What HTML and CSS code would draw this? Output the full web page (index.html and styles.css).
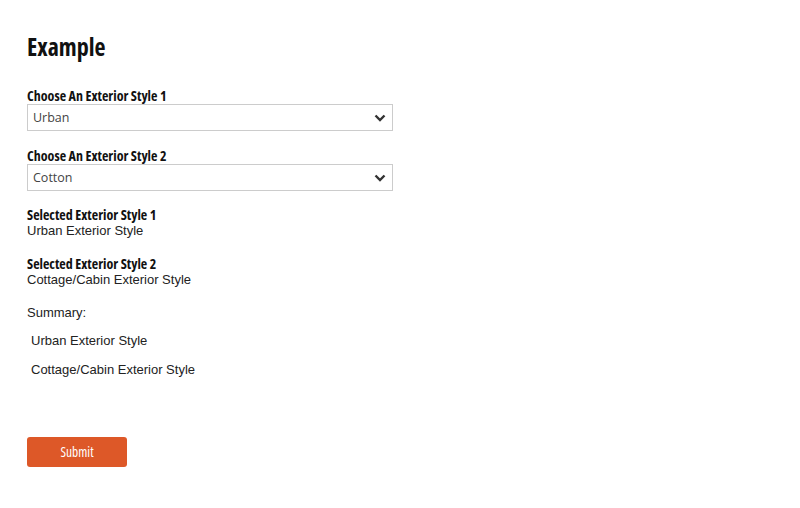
FILE: index.html
```html
<!DOCTYPE html>
<html>
<head>
<meta charset="utf-8">
<link rel="stylesheet" href="styles.css">
</head>
<body>
<div class="page">
  <h1 class="title">Example</h1>
  <div class="field">
    <label class="label">Choose An Exterior Style 1</label>
    <div class="select-wrap">
      <select class="select"><option>Urban</option></select>
      <svg class="chev" width="12" height="8" viewBox="0 0 12 8"><path d="M1.5 1.5 L6 6 L10.5 1.5" fill="none" stroke="#333" stroke-width="2.4"/></svg>
    </div>
  </div>
  <div class="field field-last">
    <label class="label">Choose An Exterior Style 2</label>
    <div class="select-wrap">
      <select class="select"><option>Cotton</option></select>
      <svg class="chev" width="12" height="8" viewBox="0 0 12 8"><path d="M1.5 1.5 L6 6 L10.5 1.5" fill="none" stroke="#333" stroke-width="2.4"/></svg>
    </div>
  </div>
  <div class="selected">
    <div class="label">Selected Exterior Style 1</div>
    <div class="value">Urban Exterior Style</div>
  </div>
  <div class="selected">
    <div class="label">Selected Exterior Style 2</div>
    <div class="value">Cottage/Cabin Exterior Style</div>
  </div>
  <div class="summary">
    <p class="sum-title">Summary:</p>
    <p class="sum-item">Urban Exterior Style</p>
    <p class="sum-item">Cottage/Cabin Exterior Style</p>
  </div>
  <button class="submit">Submit</button>
</div>
</body>
</html>
```
FILE: styles.css
```css
html, body { margin: 0; padding: 0; background: #fff; }
body { font-family: "Liberation Sans", Arial, sans-serif; font-size: 13px; color: #222; }
.page { padding: 27px 27px; }
.title {
  font-family: "Open Sans", sans-serif;
  font-stretch: condensed;
  font-weight: 700;
  font-size: 24px;
  line-height: 40px;
  margin: 0 0 20px;
  color: #111;
}
.label {
  display: block;
  font-family: "Open Sans", sans-serif;
  font-stretch: condensed;
  font-weight: 700;
  font-size: 14px;
  line-height: 17px;
  color: #111;
}
.field { margin-bottom: 16px; width: 366px; }
.field-last { margin-bottom: 15px; }
.select-wrap { position: relative; }
.select {
  appearance: none;
  -webkit-appearance: none;
  width: 366px;
  height: 27px;
  border: 1px solid #ccc;
  border-radius: 0;
  background: #fff;
  padding: 0 5px;
  font-family: "Open Sans", sans-serif;
  font-size: 12.5px;
  color: #444;
  outline: none;
}
.chev { position: absolute; right: 7px; top: 10px; }
.selected { margin-bottom: 16px; }
.value { line-height: 16px; }
.summary { padding-top: 1px; }
.sum-title { margin: 0 0 12px; line-height: 16px; }
.sum-item { margin: 0 0 13px; padding-left: 4px; line-height: 16px; }
.submit {
  margin-top: 46px;
  width: 100px;
  height: 30px;
  background: #dd5828;
  border: none;
  border-radius: 3px;
  color: #fff;
  font-family: "Open Sans", sans-serif;
  font-stretch: condensed;
  font-size: 13.5px;
  cursor: pointer;
}
```
